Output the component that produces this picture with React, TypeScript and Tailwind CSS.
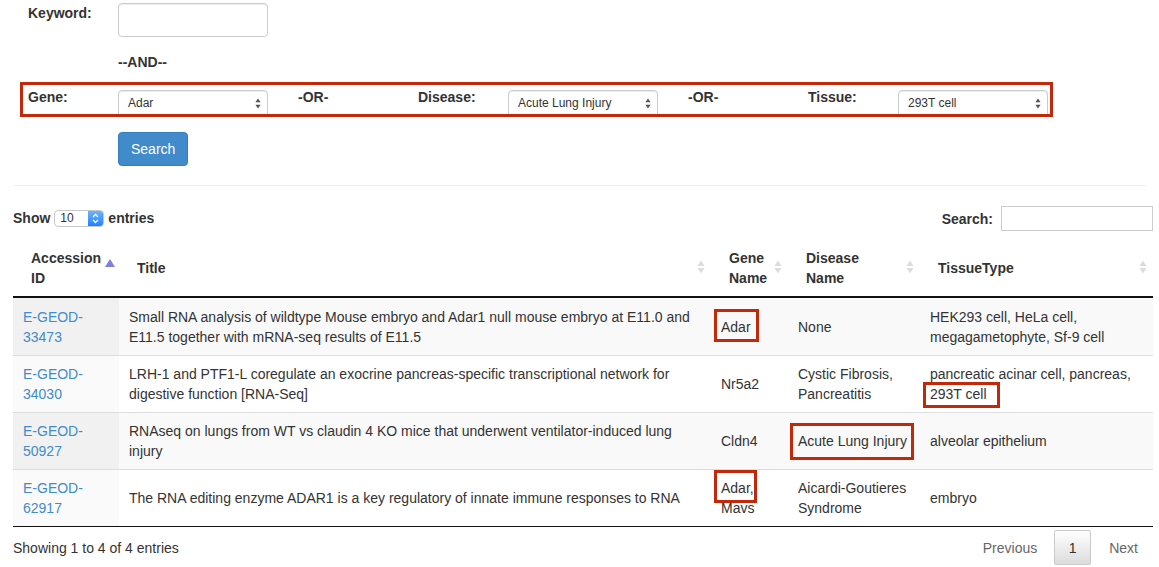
import type { ReactNode } from 'react';

type Row = {
  id: [string, string];
  title: ReactNode;
  gene: ReactNode;
  disease: ReactNode;
  tissue: ReactNode;
};

function Mark({ box, children }: { box: string; children: ReactNode }) {
  return (
    <span className="relative inline-block">
      {children}
      <span className={`pointer-events-none absolute border-[3px] border-[#c2290b] ${box}`} />
    </span>
  );
}

function SelectArrows() {
  return (
    <svg width="6" height="11" viewBox="0 0 6 11" className="mt-[2px] shrink-0">
      <path d="M3 0.5 L5.6 4.3 L0.4 4.3 Z" fill="#555" />
      <path d="M3 10.5 L5.6 6.7 L0.4 6.7 Z" fill="#555" />
    </svg>
  );
}

function SortBoth() {
  return (
    <svg width="8" height="14" viewBox="0 0 8 14">
      <path d="M4 0.5 L7.5 6 L0.5 6 Z" fill="#dcdcdc" />
      <path d="M4 13.5 L7.5 8 L0.5 8 Z" fill="#dcdcdc" />
    </svg>
  );
}

function FakeSelect({ value }: { value: string }) {
  return (
    <div className="mt-[3px] flex h-[34px] w-[150px] shrink-0 items-start justify-between rounded-[4px] border border-[#ccc] bg-white pl-[9px] pr-[6px] pt-[5px] text-[12px] leading-[14px] text-[#333] shadow-[inset_0_1px_1px_rgba(0,0,0,0.075)]">
      <span>{value}</span>
      <SelectArrows />
    </div>
  );
}

const rows: Row[] = [
  {
    id: ['E-GEOD-', '33473'],
    title:
      'Small RNA analysis of wildtype Mouse embryo and Adar1 null mouse embryo at E11.0 and E11.5 together with mRNA-seq results of E11.5',
    gene: (
      <Mark box="left-[-7px] right-[-8px] top-[-8px] bottom-[-5px]">Adar</Mark>
    ),
    disease: 'None',
    tissue: 'HEK293 cell, HeLa cell, megagametophyte, Sf-9 cell',
  },
  {
    id: ['E-GEOD-', '34030'],
    title:
      'LRH-1 and PTF1-L coregulate an exocrine pancreas-specific transcriptional network for digestive function [RNA-Seq]',
    gene: 'Nr5a2',
    disease: 'Cystic Fibrosis, Pancreatitis',
    tissue: (
      <>
        pancreatic acinar cell, pancreas,{' '}
        <Mark box="left-[-7px] right-[-13px] top-[-2px] bottom-[-4px]">293T cell</Mark>
      </>
    ),
  },
  {
    id: ['E-GEOD-', '50927'],
    title:
      'RNAseq on lungs from WT vs claudin 4 KO mice that underwent ventilator-induced lung injury',
    gene: 'Cldn4',
    disease: (
      <Mark box="left-[-8px] right-[-7px] top-[-8px] bottom-[-9px]">
        <span className="whitespace-nowrap">Acute Lung Injury</span>
      </Mark>
    ),
    tissue: 'alveolar epithelium',
  },
  {
    id: ['E-GEOD-', '62917'],
    title: 'The RNA editing enzyme ADAR1 is a key regulatory of innate immune responses to RNA',
    gene: (
      <>
        <Mark box="left-[-7px] right-[-3px] top-[-8px] bottom-[-5px]">Adar,</Mark> Mavs
      </>
    ),
    disease: 'Aicardi-Goutieres Syndrome',
    tissue: 'embryo',
  },
];

export default function App() {
  return (
    <div className="min-h-[567px] bg-white pl-[13px] text-[14px] leading-[20px] text-[#333] [font-family:'Liberation_Sans',Arial,sans-serif]">
      {/* search form */}
      <div className="pt-[3px]">
        <div className="flex items-start pl-[15px]">
          <span className="w-[90px] font-bold">Keyword:</span>
          <div className="h-[34px] w-[150px] rounded-[4px] border border-[#ccc] shadow-[inset_0_1px_1px_rgba(0,0,0,0.075)]" />
        </div>

        <div className="ml-[105px] mt-[15px] font-bold">--AND--</div>

        <div className="ml-[7px] mt-[10px] h-[35px] w-[1033px] overflow-hidden border-[3px] border-[#c2290b]">
          <div className="flex items-start pl-[5px] pt-[2px]">
            <span className="w-[90px] shrink-0 font-bold">Gene:</span>
            <FakeSelect value="Adar" />
            <span className="ml-[30px] w-[120px] shrink-0 font-bold">-OR-</span>
            <span className="w-[90px] shrink-0 font-bold">Disease:</span>
            <FakeSelect value="Acute Lung Injury" />
            <span className="ml-[30px] w-[120px] shrink-0 font-bold">-OR-</span>
            <span className="w-[90px] shrink-0 font-bold">Tissue:</span>
            <FakeSelect value="293T cell" />
          </div>
        </div>

        <button
          type="button"
          className="ml-[105px] mt-[15px] rounded-[4px] border border-[#357ebd] bg-[#428bca] px-[12px] py-[6px] text-white"
        >
          Search
        </button>
      </div>

      <div className="mt-[19px] h-px w-[1133px] bg-[#eee]" />

      {/* table controls */}
      <div className="mt-[20px] flex w-[1140px] items-start justify-between">
        <div className="flex items-center pt-[2px] font-bold">
          <span>Show</span>
          <div className="mx-[4px] flex h-[17px] w-[50px] items-center overflow-hidden rounded-[4px] border border-[#c8c8c8] bg-white">
            <span className="flex-1 pl-[5px] text-[12px] font-normal leading-none">10</span>
            <span className="flex h-full w-[15px] items-center justify-center bg-gradient-to-b from-[#6cb3fa] to-[#1a82fb]">
              <svg width="7" height="11" viewBox="0 0 7 11">
                <path d="M1 4 L3.5 1.5 L6 4" stroke="white" strokeWidth="1.3" fill="none" />
                <path d="M1 7 L3.5 9.5 L6 7" stroke="white" strokeWidth="1.3" fill="none" />
              </svg>
            </span>
          </div>
          <span>entries</span>
        </div>
        <div className="flex items-center font-bold">
          <span className="mr-[8px]">Search:</span>
          <div className="h-[25px] w-[152px] border border-[#ccc] bg-white" />
        </div>
      </div>

      {/* table */}
      <table className="mt-[8px] w-[1140px] table-fixed border-collapse border-b border-[#111]">
        <colgroup>
          <col className="w-[106px]" />
          <col className="w-[592px]" />
          <col className="w-[77px]" />
          <col className="w-[132px]" />
          <col className="w-[233px]" />
        </colgroup>
        <thead>
          <tr className="border-b-2 border-[#111] text-left font-bold">
            <th className="relative pb-[8px] pl-[18px] pr-[10px] pt-[9px] align-middle">
              Accession ID
              <svg width="10" height="8" viewBox="0 0 10 8" className="absolute right-[4px] top-[20px]">
                <path d="M5 0 L10 8 L0 8 Z" fill="#7f7fe0" />
              </svg>
            </th>
            <th className="relative pb-[8px] pl-[18px] pr-[24px] pt-[9px] align-middle">
              Title
              <span className="absolute right-[6px] top-[21px]">
                <SortBoth />
              </span>
            </th>
            <th className="relative pb-[8px] pl-[18px] pr-[10px] pt-[9px] align-middle">
              Gene Name
              <span className="absolute right-[6px] top-[21px]">
                <SortBoth />
              </span>
            </th>
            <th className="relative pb-[8px] pl-[18px] pr-[24px] pt-[9px] align-middle">
              Disease Name
              <span className="absolute right-[6px] top-[21px]">
                <SortBoth />
              </span>
            </th>
            <th className="relative pb-[8px] pl-[18px] pr-[24px] pt-[9px] align-middle">
              TissueType
              <span className="absolute right-[6px] top-[21px]">
                <SortBoth />
              </span>
            </th>
          </tr>
        </thead>
        <tbody>
          {rows.map((row, i) => {
            const odd = i % 2 === 0;
            const pad = i === 0 ? 'pt-[9px] pb-[8px]' : 'py-[8px]';
            return (
              <tr
                key={row.id[1]}
                className={`${i > 0 ? 'border-t border-[#ddd]' : ''} ${odd ? 'bg-[#f9f9f9]' : 'bg-white'}`}
              >
                <td className={`${pad} pl-[10px] pr-[8px] align-middle ${odd ? 'bg-[#f1f1f1]' : 'bg-[#fafafa]'}`}>
                  <a className="text-[#428bca]">
                    {row.id[0]}
                    <br />
                    {row.id[1]}
                  </a>
                </td>
                <td className={`${pad} pl-[10px] pr-[8px] align-middle`}>{row.title}</td>
                <td className={`${pad} pl-[10px] pr-[8px] align-middle`}>{row.gene}</td>
                <td className={`${pad} pl-[10px] pr-[4px] align-middle`}>{row.disease}</td>
                <td className={`${pad} pl-[10px] pr-[8px] align-middle`}>{row.tissue}</td>
              </tr>
            );
          })}
        </tbody>
      </table>

      {/* footer */}
      <div className="mt-[3px] flex h-[35px] w-[1140px] items-center justify-between">
        <span>Showing 1 to 4 of 4 entries</span>
        <div className="flex items-center pr-[15px] text-[#666]">
          <span>Previous</span>
          <span className="ml-[17px] flex h-[35px] w-[37px] items-center justify-center rounded-[2px] border border-[#cacaca] bg-gradient-to-b from-white to-[#dcdcdc] text-[#333]">
            1
          </span>
          <span className="ml-[18px]">Next</span>
        </div>
      </div>
    </div>
  );
}
